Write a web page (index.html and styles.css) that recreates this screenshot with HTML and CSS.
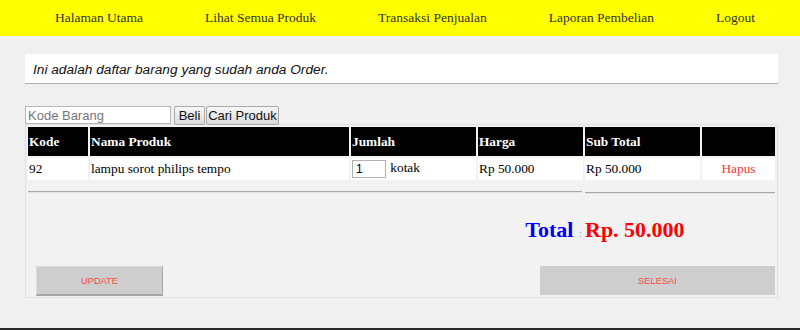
FILE: index.html
```html
<!DOCTYPE html>
<html lang="id">
<head>
  <meta charset="UTF-8" />
  <title>Daftar Order</title>
  <link rel="stylesheet" href="styles.css">
</head>
<body>

  <nav class="topnav">
    <a href="#">Halaman Utama</a>
    <a href="#">Lihat Semua Produk</a>
    <a href="#">Transaksi Penjualan</a>
    <a href="#">Laporan Pembelian</a>
    <a href="#">Logout</a>
  </nav>

  <main class="content">
    <div class="notice">Ini adalah daftar barang yang sudah anda Order.</div>

    <form class="search" onsubmit="return false">
      <input type="text" class="search-input" placeholder="Kode Barang" />
      <button class="btn btn-beli">Beli</button>
      <button class="btn btn-cari">Cari Produk</button>
    </form>

    <div class="panel">
      <table class="order-table">
        <thead>
          <tr>
            <th class="c-kode">Kode</th>
            <th class="c-nama">Nama Produk</th>
            <th class="c-jumlah">Jumlah</th>
            <th class="c-harga">Harga</th>
            <th class="c-sub">Sub Total</th>
            <th></th>
          </tr>
        </thead>
        <tbody>
          <tr>
            <td>92</td>
            <td>lampu sorot philips tempo</td>
            <td><input type="text" class="qty" value="1" /> kotak</td>
            <td>Rp 50.000</td>
            <td>Rp 50.000</td>
            <td class="hapus"><a href="#">Hapus</a></td>
          </tr>
        </tbody>
      </table>

      <div class="summary">
        <div class="sum-left">
          <hr class="line" />
          <div class="total-label"><b>Total</b> <span class="colon">:</span></div>
        </div>
        <div class="sum-right">
          <hr class="line line-right" />
          <div class="total-amount">Rp. 50.000</div>
        </div>
      </div>

      <div class="actions">
        <button class="btn-update">UPDATE</button>
        <button class="btn-selesai">SELESAI</button>
      </div>
    </div>
  </main>

  <footer class="footer"></footer>

</body>
</html>
```

FILE: styles.css
```css
body {
  margin: 0;
  background-color: #f0f0f0;
  font-family: 'Liberation Serif', 'Times New Roman', serif;
  color: #000;
}

.topnav {
  display: flex;
  gap: 62px;
  height: 36px;
  padding-left: 55px;
  background-color: #ffff00;
  line-height: 36px;
}

.topnav a {
  color: #333;
  font-size: 13.5px;
  text-decoration: none;
}

.content {
  width: 753px;
  margin-left: 25px;
}

.notice {
  margin-top: 18px;
  height: 29px;
  padding-left: 8px;
  background: white;
  border-bottom: 1px solid #b0b0b0;
  font-family: 'Liberation Sans', sans-serif;
  font-style: italic;
  font-size: 13.7px;
  line-height: 31px;
  color: #111;
}

.search {
  display: flex;
  margin-top: 22px;
  height: 18px;
}

.search-input {
  box-sizing: border-box;
  width: 146px;
  height: 18px;
  margin: 0 3px 0 0;
  padding: 0 2px;
  border: 1px solid #b8b8b8;
  font-family: 'Liberation Sans', Arial, sans-serif;
  font-size: 13px;
}

.search-input::placeholder {
  color: #777;
}

.btn {
  box-sizing: border-box;
  height: 19px;
  padding: 0;
  border: 1px solid #a9a9a9;
  border-radius: 2px;
  background: linear-gradient(#f7f7f7, #dcdcdc);
  font-family: 'Liberation Sans', Arial, sans-serif;
  font-size: 13px;
  color: #111;
}

.btn-beli {
  width: 31px;
  margin-right: 1px;
}

.btn-cari {
  width: 73px;
}

.panel {
  background-color: #f2f2f2;
  border: 1px solid #e0e0e0;
  padding-bottom: 1px;
}

.order-table {
  width: 100%;
  table-layout: fixed;
  border-spacing: 2px;
  font-size: 13.33px;
}

.order-table th,
.order-table td {
  padding: 1px;
  text-align: left;
  vertical-align: middle;
}

.order-table th {
  height: 27px;
  background-color: #000;
  color: #fff;
}

.order-table td {
  height: 20px;
  background-color: #fff;
  white-space: nowrap;
}

.c-kode { width: 58px; }
.c-nama { width: 257px; }
.c-jumlah { width: 123px; }
.c-harga { width: 103px; }
.c-sub { width: 113px; }

.qty {
  box-sizing: border-box;
  width: 34px;
  height: 18px;
  margin: 0 1px 0 0;
  padding: 0 3px;
  border: 1px solid #b0b0b0;
  font-family: 'Liberation Sans', Arial, sans-serif;
  font-size: 12px;
  vertical-align: middle;
}

.order-table td.hapus {
  text-align: center;
}

.hapus a {
  color: #ff3333;
  text-decoration: none;
}

.summary {
  display: grid;
  grid-template-columns: 554px 190px;
  column-gap: 3px;
  padding: 0 2px;
}

.line {
  height: 0;
  margin: 9px 0 0;
  border: 0;
  border-top: 1px solid #a8a8a8;
  border-bottom: 1px solid #e4e4e4;
}

.line-right {
  margin-top: 10px;
}

.total-label {
  margin-top: 24px;
  text-align: right;
  font-size: 22px;
  line-height: 26px;
  color: #0000ff;
}

.colon {
  font-size: 11px;
  color: #999;
}

.total-amount {
  margin-top: 23px;
  font-size: 22px;
  font-weight: bold;
  line-height: 26px;
  color: #ff0000;
}

.actions {
  display: flex;
  justify-content: space-between;
  margin-top: 20px;
  padding: 0 2px 0 10px;
}

.btn-update,
.btn-selesai {
  height: 30px;
  padding: 0;
  background-color: #cecece;
  font-family: 'Liberation Sans', Arial, sans-serif;
  font-size: 9.3px;
  color: #ff4848;
}

.btn-update {
  width: 127px;
  border: 1px solid #dadada;
  border-right-color: #a6a6a6;
  border-bottom: 2px solid #a6a6a6;
}

.btn-selesai {
  width: 235px;
  height: 29px;
  border: none;
}

.footer {
  height: 30px;
  margin-top: 30px;
  background-color: #2a2a2a;
}
```
